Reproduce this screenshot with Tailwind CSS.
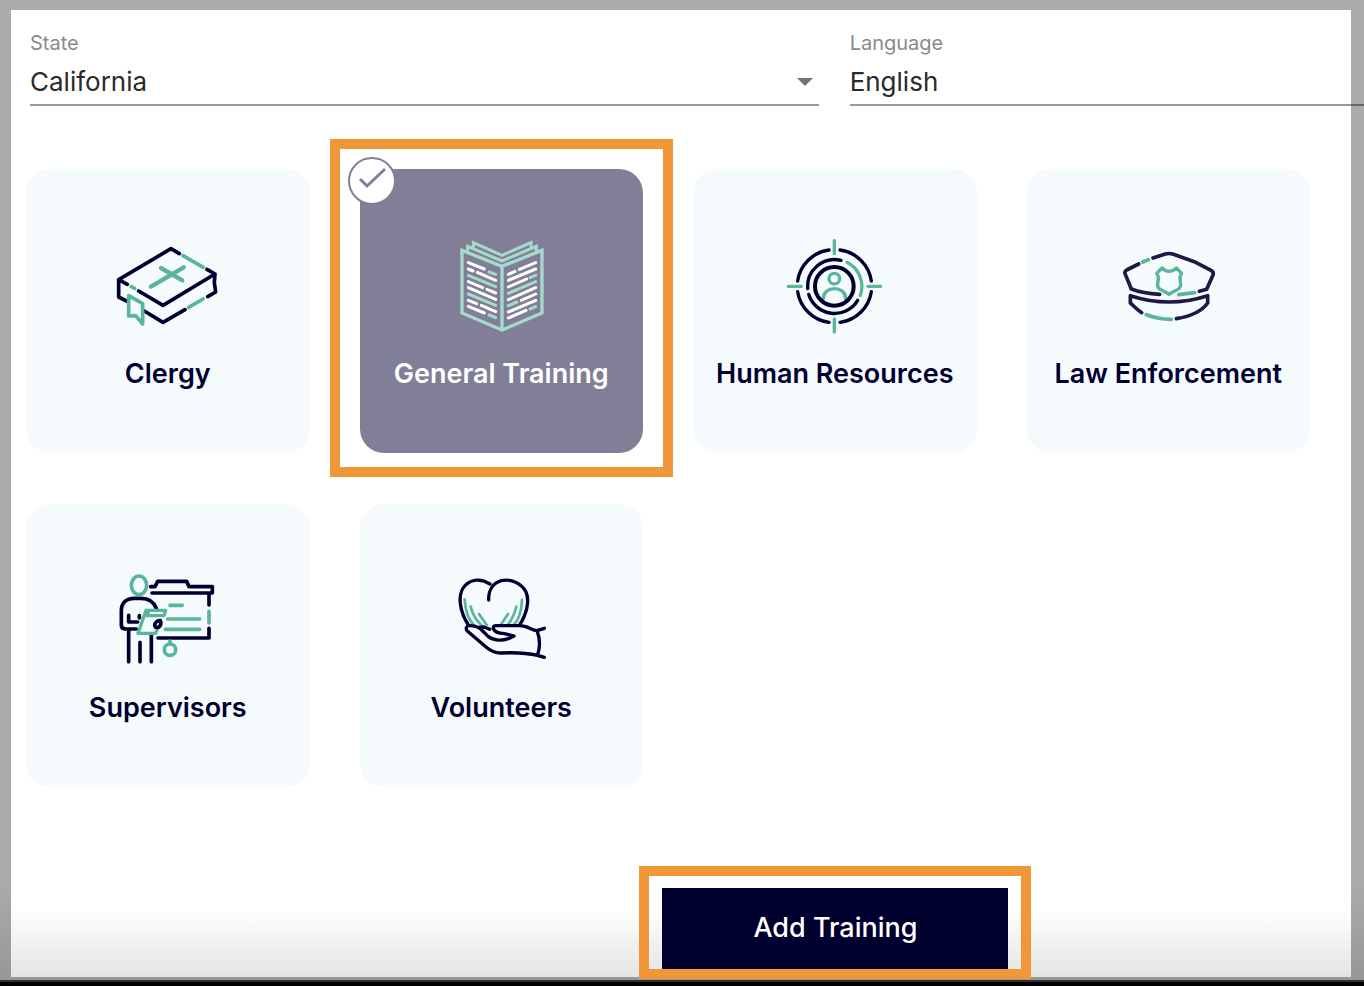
<!DOCTYPE html>
<html lang="en">
<head>
  <meta charset="UTF-8">
  <meta name="viewport" content="width=device-width, initial-scale=1.0">
  <title>Add Training</title>
  <script src="https://cdn.jsdelivr.net/npm/@tailwindcss/browser@4"></script>
</head>
<body class="min-h-screen flex flex-col overflow-x-hidden bg-black font-['Inter',sans-serif]">

  <div class="flex-1 flex flex-col pt-[10px] pr-[13px] pb-[3px] pl-[11px] bg-linear-to-b from-[#ababab] from-90% to-[#979797]">
    <main class="flex-1 flex flex-col bg-linear-to-b from-white from-93% to-[#e4e4e4]">

      <!-- FILTERS -->
      <form class="flex gap-[31px] pl-[19px] pt-[21px]">
        <div class="relative w-[59.7%] shrink-0 border-b-2 border-black/40">
          <label for="state" class="block text-[20px] leading-6 text-[#8a8a8a]">State</label>
          <select id="state" class="block w-full appearance-none pt-[11px] pb-[6px] text-[26px] leading-8 text-[#2a2a2a] bg-transparent">
            <option>California</option>
          </select>
          <svg class="absolute right-1.5 top-[47px] w-4 h-2 pointer-events-none" viewBox="0 0 16 8"><path d="M0 0h16L8 8z" fill="#757575" /></svg>
        </div>
        <div class="w-[59.7%] shrink-0 border-b-2 border-black/40">
          <label for="language" class="block text-[20px] leading-6 text-[#8a8a8a]">Language</label>
          <select id="language" class="block w-full appearance-none pt-[11px] pb-[6px] text-[26px] leading-8 text-[#2a2a2a] bg-transparent">
            <option>English</option>
          </select>
        </div>
      </form>

      <!-- TRAININGS -->
      <section class="grid grid-cols-4 gap-x-[50px] gap-y-[51px] pl-[15px] pr-[41px] pt-[63px]">

        <button type="button" class="aspect-square flex flex-col items-center justify-center gap-[18px] pb-0.5 rounded-3xl bg-[#f5fafd] text-[#000030]">
          <svg class="w-[135px] h-[110px]" viewBox="0 0 405 330" fill="none" stroke="#000030" stroke-width="11" stroke-linecap="round" stroke-linejoin="round">
            <path d="M238 71 213 56 56 149 82 163M116 183 189 226 345 132 321 118M345 132 343 158 347 186 323 200M255 239 189 277 133 243M56 149V201L80 213" />
            <g stroke="#5bb59a">
              <path d="M249 77 310 112M94 170 104 175M266 232 309 207" />
              <path d="M86 197 128 221V282L107 257 86 258Z" />
              <path d="M153 170 251 112M183 114 247 151" stroke-width="13" />
            </g>
          </svg>
          <span class="text-[27px] leading-8 font-semibold">Clergy</span>
        </button>

        <button type="button" aria-pressed="true" class="relative aspect-square flex flex-col items-center justify-center gap-[18px] pb-0.5 rounded-3xl bg-[#807f97] text-white">
          <span class="absolute -inset-[30px] -bottom-6 border-[10px] border-[#f09837]"></span>
          <svg class="absolute -left-3 -top-3 w-12 h-12" viewBox="0 0 48 48" fill="none" stroke="#807f97">
            <circle cx="24" cy="24" r="23" fill="#fff" stroke-width="2" />
            <path d="M12 22 19 29 37 12" stroke-width="3" />
          </svg>
          <svg class="w-[120px] h-[110px]" viewBox="0 0 360 330" fill="none" stroke="#a6dacb" stroke-width="9" stroke-linecap="round">
            <path d="M63 61 183 109 303 61V249L183 300 63 249ZM183 109V300" stroke-width="10" />
            <path d="M80 64V49L183 93 286 49V64M97 51V38L183 76 270 38V51" stroke-width="9" />
            <path d="M144 126 164 133M82 136 164 170M82 192 164 226M144 255 164 263M284 136 267 143M284 155 202 190M228 216 202 227M284 230 267 237" />
            <path stroke="#fff" d="M82 98 130 117M82 117 96 123M109 127 164 151M82 155 125 173M138 178 164 189M82 173 164 208M82 211 107 221M121 226 164 245M82 229 130 249M284 98 235 118M222 124 202 133M284 117 202 151M257 147 202 171M284 173 202 209M284 192 241 211M284 211 202 246M255 241 202 264" />
          </svg>
          <span class="text-[27px] leading-8 font-semibold">General Training</span>
        </button>

        <button type="button" class="aspect-square flex flex-col items-center justify-center gap-[18px] pb-0.5 rounded-3xl bg-[#f5fafd] text-[#000030]">
          <svg class="w-[120px] h-[110px]" viewBox="0 0 360 330" fill="none" stroke="#000030" stroke-width="10" stroke-linecap="round">
            <path d="M162 60A110 110 0 0 0 68 153M195 60A110 110 0 0 1 289 153M68 185A110 110 0 0 0 162 277M289 185A110 110 0 0 1 195 277" />
            <path d="M198 91A81 81 0 0 0 98 176M101 193A81 81 0 0 0 248 211" />
            <g stroke="#5bb59a">
              <path d="M216 97A81 81 0 0 1 256 196M178 32V71M178 267V306M40 169H79M279 169H317" />
              <circle cx="178" cy="146" r="16" />
              <path d="M145 206C145 166 212 166 212 206" />
            </g>
            <circle cx="178" cy="169" r="58" stroke-width="12" />
          </svg>
          <span class="text-[27px] leading-8 font-semibold">Human Resources</span>
        </button>

        <button type="button" class="aspect-square flex flex-col items-center justify-center gap-[18px] pb-0.5 rounded-3xl bg-[#f5fafd] text-[#000030]">
          <svg class="w-[125px] h-[110px]" viewBox="0 -15 375 330" fill="none" stroke="#201844" stroke-width="11" stroke-linecap="round" stroke-linejoin="round">
            <path d="M141 69 178 57Q189 54 200 57L265 80 315 106Q324 111 321 120L302 163 280 169M98 87 62 105Q55 109 57 116L76 162Q110 175 161 178" />
            <path d="M107 233C88 220 81 210 73 204V182Q189 220 305 182V204C287 229 255 244 211 251" />
            <g stroke="#5bb59a">
              <path d="M110 81 127 74M218 179 266 173M121 239Q155 252 196 253" />
              <path d="M152 115 168 99Q178 109 189 109 201 109 211 99L227 115Q219 126 223 140C230 165 205 166 189 178 173 166 148 165 156 140Q160 126 152 115Z" stroke-width="10" />
            </g>
          </svg>
          <span class="text-[27px] leading-8 font-semibold">Law Enforcement</span>
        </button>

        <button type="button" class="aspect-square flex flex-col items-center justify-center gap-[18px] pb-0.5 rounded-3xl bg-[#f5fafd] text-[#000030]">
          <svg class="w-[125px] h-[110px]" viewBox="0 0 375 330" fill="none" stroke="#000030" stroke-width="11" stroke-linecap="round" stroke-linejoin="round">
            <path d="M137 68H150L158 52H245L252 68H322V87H141M312 89V123M312 193V222H159" />
            <path d="M154 133C146 112 130 103 108 103H88C63 103 49 117 49 141V184Q49 195 62 195H94M71 154V174H98M103 155V162M71 197V293M105 235V293M139 213V293" />
            <g stroke="#5bb59a">
              <path d="M312 142V177M195 124H232M188 165H284M181 196H284M195 231V236" />
              <ellipse cx="102" cy="64" rx="23" ry="28" />
              <circle cx="195" cy="257" r="17" />
              <path d="M123 139H182L177 155H126ZM123 139 99 208H151L156 199M126 155 130 148" stroke-width="10" />
            </g>
            <path d="M152 190C145 182 154 168 166 170 171 181 163 194 152 190Z" />
          </svg>
          <span class="text-[27px] leading-8 font-semibold">Supervisors</span>
        </button>

        <button type="button" class="aspect-square flex flex-col items-center justify-center gap-[18px] pb-0.5 rounded-3xl bg-[#f5fafd] text-[#000030]">
          <svg class="w-[120px] h-[110px]" viewBox="0 0 360 330" fill="none" stroke="#000030" stroke-width="10" stroke-linecap="round" stroke-linejoin="round">
            <g stroke="#5bb59a" stroke-width="8">
              <path d="M71 107C73 140 80 164 98 183M89 128C95 152 106 170 121 183M114 150 137 183M243 107C242 143 234 166 218 183M226 128C221 149 212 168 200 183M201 150 181 180" />
            </g>
            <path d="M147 60C120 42 90 45 71 66 47 93 57 145 83 184M143 108C142 78 157 57 181 50 210 43 242 58 255 84 267 111 256 153 235 184" />
            <path d="M83 185C75 187 74 194 78 200L136 250Q157 268 181 267 245 264 290 274L310 280M83 185Q104 183 119 195L142 218C158 231 185 230 202 224L219 216 190 209Q162 208 157 194 156 185 165 185H237C259 185 271 198 288 200L310 193M288 200Q302 236 290 272M111 190 129 189 146 196" />
          </svg>
          <span class="text-[27px] leading-8 font-semibold">Volunteers</span>
        </button>
      </section>

      <!-- SUBMIT -->
      <div class="mt-auto -mb-0.5 ml-[46.9%] w-98 border-[10px] border-[#f09837] px-[13px] pt-3">
        <button type="button" class="block w-full h-[81px] bg-[#00002e] text-[27px] font-medium text-white">Add Training</button>
      </div>
    </main>
  </div>

  <footer class="h-1.5 border-t-2 border-[#303030] bg-black"></footer>
</body>
</html>
